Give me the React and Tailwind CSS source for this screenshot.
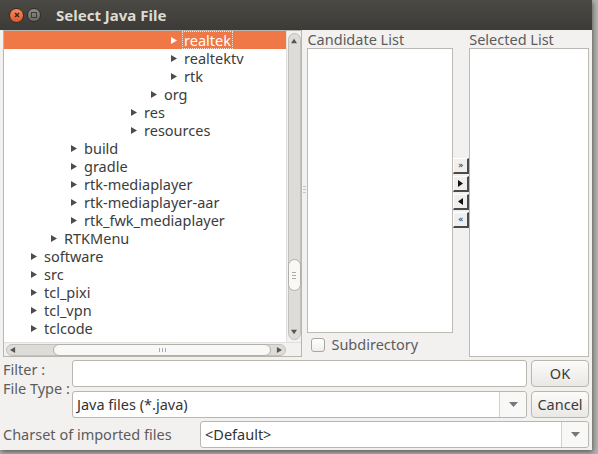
import React from 'react';

const rows = [
  { label: 'realtek', level: 7, selected: true },
  { label: 'realtektv', level: 7 },
  { label: 'rtk', level: 7 },
  { label: 'org', level: 6 },
  { label: 'res', level: 5 },
  { label: 'resources', level: 5 },
  { label: 'build', level: 2 },
  { label: 'gradle', level: 2 },
  { label: 'rtk-mediaplayer', level: 2 },
  { label: 'rtk-mediaplayer-aar', level: 2 },
  { label: 'rtk_fwk_mediaplayer', level: 2 },
  { label: 'RTKMenu', level: 1 },
  { label: 'software', level: 0 },
  { label: 'src', level: 0 },
  { label: 'tcl_pixi', level: 0 },
  { label: 'tcl_vpn', level: 0 },
  { label: 'tclcode', level: 0 },
];

function Arrow({ dir = 'right', color = '#555', size = 7 }) {
  const pts = {
    right: '1,0 7,3.5 1,7',
    left: '6,0 0,3.5 6,7',
    up: '0,6 3.5,1 7,6',
    down: '0,1 3.5,6 7,1',
  };
  return (
    <svg width={size} height={size} viewBox="0 0 7 7" className="shrink-0">
      <polygon points={pts[dir]} fill={color} />
    </svg>
  );
}

function SmallButton({ children }) {
  return (
    <div className="w-[16px] h-[16px] bg-[#f0efed] border-t border-l border-[#fff] border-r-2 border-b-2 border-r-[#4a4a4a] border-b-[#4a4a4a] flex items-center justify-center text-[9px] leading-none text-[#222] font-['DejaVu_Sans',sans-serif]">
      {children}
    </div>
  );
}

function Tree() {
  return (
    <div className="w-[300px] h-[327px] border border-[#b9b6b0] bg-white flex flex-col">
      <div className="flex flex-1 min-h-0">
        <div className="flex-1 overflow-hidden">
          {rows.map((r) => (
            <div
              key={r.label}
              className={`h-[18px] flex items-center ${r.selected ? 'bg-[#f07746] text-white' : 'text-[#3c3c3c]'}`}
              style={{ paddingLeft: 26 + r.level * 20 }}
            >
              <Arrow color={r.selected ? '#fff' : '#4d4d4d'} />
              <span
                className={`ml-[6px] h-[16px] leading-[16px] px-[1px] whitespace-nowrap ${r.selected ? 'outline outline-1 outline-dotted outline-[#fde0d2]' : ''}`}
              >
                {r.label}
              </span>
            </div>
          ))}
        </div>
        {/* vertical scrollbar */}
        <div className="w-[15px] bg-[#f2f1f0] flex flex-col items-center py-[2px] border-l border-[#e2e0dc]">
          <div className="w-[13px] flex-1 rounded-full bg-[#dedcd8] border border-[#c3c0bb] flex flex-col items-center">
            <div className="h-[14px] flex items-center justify-center">
              <Arrow dir="up" color="#555" size={6} />
            </div>
            <div className="flex-1 w-full flex flex-col justify-end pb-[34px]">
              <div className="h-[32px] w-[13px] -ml-px rounded-full bg-[#f8f8f7] border border-[#b2afaa] flex flex-col items-center justify-center gap-[2px]">
                <div className="w-[4px] h-px bg-[#aaa]" />
                <div className="w-[4px] h-px bg-[#aaa]" />
                <div className="w-[4px] h-px bg-[#aaa]" />
              </div>
            </div>
            <div className="h-[14px] flex items-center justify-center">
              <Arrow dir="down" color="#555" size={6} />
            </div>
          </div>
        </div>
      </div>
      {/* horizontal scrollbar */}
      <div className="h-[14px] bg-[#f2f1f0] flex items-center px-[2px] border-t border-[#e2e0dc]">
        <div className="flex-1 h-[12px] rounded-full bg-[#dedcd8] border border-[#c3c0bb] flex items-center">
          <div className="w-[12px] flex justify-center">
            <Arrow dir="left" color="#555" size={6} />
          </div>
          <div className="flex-1 flex pl-[34px] pr-[2px]">
            <div className="flex-1 h-[12px] -my-px rounded-full bg-[#f8f8f7] border border-[#b2afaa] flex items-center justify-center gap-[2px]">
              <div className="w-px h-[4px] bg-[#aaa]" />
              <div className="w-px h-[4px] bg-[#aaa]" />
              <div className="w-px h-[4px] bg-[#aaa]" />
            </div>
          </div>
          <div className="w-[12px] flex justify-center">
            <Arrow dir="right" color="#555" size={6} />
          </div>
        </div>
        <div className="w-[13px]" />
      </div>
    </div>
  );
}

function Combo({ text, arrowW = 27 }) {
  return (
    <div className="flex-1 h-[27px] bg-white border border-[#b9b6b0] rounded-[3px] flex items-center">
      <span className="flex-1 pl-[4px] text-[#333] whitespace-nowrap">{text}</span>
      <div
        className="h-full border-l border-[#d3d0cb] bg-[#f8f8f7] rounded-r-[3px] flex items-center justify-center"
        style={{ width: arrowW }}
      >
        <svg width="9" height="5" viewBox="0 0 9 5">
          <polygon points="0,0 9,0 4.5,5" fill="#777" />
        </svg>
      </div>
    </div>
  );
}

function Button({ children }) {
  return (
    <div className="w-[58px] h-[27px] rounded-[4px] border border-[#b9b6b0] bg-gradient-to-b from-[#fbfbfa] to-[#eae8e5] flex items-center justify-center text-[#3c3c3c]">
      {children}
    </div>
  );
}

export default function App() {
  return (
    <div className="w-[598px] h-[454px] bg-[#b4b3b0] font-['Noto_Sans',sans-serif] text-[14.5px] overflow-hidden">
      <div className="w-[592px] h-[450px] bg-[#f2f1f0] flex flex-col shadow-[1px_2px_5px_rgba(0,0,0,0.5)]">
        {/* title bar */}
        <div className="h-[30px] bg-gradient-to-b from-[#4a4944] to-[#3c3b37] flex items-center pl-[9px] shrink-0">
          <div className="w-[15px] h-[15px] rounded-full bg-gradient-to-b from-[#f48c5e] to-[#e4562a] border border-[#3a2a20] flex items-center justify-center">
            <svg width="6" height="6" viewBox="0 0 6 6">
              <path d="M1 1L5 5M5 1L1 5" stroke="#3b2a22" strokeWidth="1.5" />
            </svg>
          </div>
          <div className="ml-[3px] w-[14px] h-[14px] rounded-full bg-gradient-to-b from-[#8d8c87] to-[#6a6965] border border-[#2f2e2b] flex items-center justify-center">
            <div className="w-[6px] h-[6px] border-[1.5px] border-[#3c3b37]" />
          </div>
          <span className="ml-[15px] font-bold text-[#dfdbd2] text-[15px]">Select Java File</span>
        </div>

        {/* main area */}
        <div className="flex px-[3px] shrink-0">
          <Tree />
          {/* splitter */}
          <div className="w-[5px] flex flex-col items-center justify-center gap-[2px] pb-[8px]">
            <div className="w-[3px] h-px bg-[#c8c5c0]" />
            <div className="w-[3px] h-px bg-[#c8c5c0]" />
            <div className="w-[3px] h-px bg-[#c8c5c0]" />
          </div>
          {/* candidate */}
          <div className="w-[146px] flex flex-col">
            <div className="h-[18px] leading-[18px] text-[#5c5c5c] whitespace-nowrap">Candidate List</div>
            <div className="h-[285px] bg-white border border-[#bdbab5]" />
            <div className="flex items-center h-[24px] pl-[4px]">
              <div className="w-[14px] h-[14px] rounded-[3px] border border-[#a9a6a1] bg-gradient-to-b from-[#fff] to-[#efeeec]" />
              <span className="ml-[6px] text-[#5c5c5c]">Subdirectory</span>
            </div>
          </div>
          {/* move buttons */}
          <div className="w-[16px] flex flex-col pt-[128px] gap-[2px]">
            <SmallButton>»</SmallButton>
            <SmallButton>
              <svg width="5" height="7" viewBox="0 0 5 7"><polygon points="0,0 5,3.5 0,7" fill="#111" /></svg>
            </SmallButton>
            <SmallButton>
              <svg width="5" height="7" viewBox="0 0 5 7"><polygon points="5,0 0,3.5 5,7" fill="#111" /></svg>
            </SmallButton>
            <SmallButton>«</SmallButton>
          </div>
          {/* selected */}
          <div className="w-[120px] flex flex-col">
            <div className="h-[18px] leading-[18px] text-[#5c5c5c] whitespace-nowrap">Selected List</div>
            <div className="h-[309px] bg-white border border-[#bdbab5]" />
          </div>
        </div>

        {/* bottom form */}
        <div className="flex px-[3px] pt-[3px]">
          <div className="w-[69px] shrink-0 flex flex-col text-[#5c5c5c] leading-[19px] whitespace-nowrap">
            <span>Filter :</span>
            <span>File Type :</span>
          </div>
          <div className="flex-1 flex flex-col gap-[4px]">
            <div className="flex gap-[4px]">
              <div className="flex-1 h-[27px] bg-white border border-[#b9b6b0] rounded-[3px]" />
              <Button>OK</Button>
            </div>
            <div className="flex gap-[4px]">
              <Combo text="Java files (*.java)" />
              <Button>Cancel</Button>
            </div>
          </div>
        </div>
        <div className="flex items-center px-[3px] pt-[3px]">
          <span className="w-[197px] shrink-0 text-[#5c5c5c] whitespace-nowrap">Charset of imported files</span>
          <Combo text="<Default>" />
        </div>
      </div>
    </div>
  );
}
